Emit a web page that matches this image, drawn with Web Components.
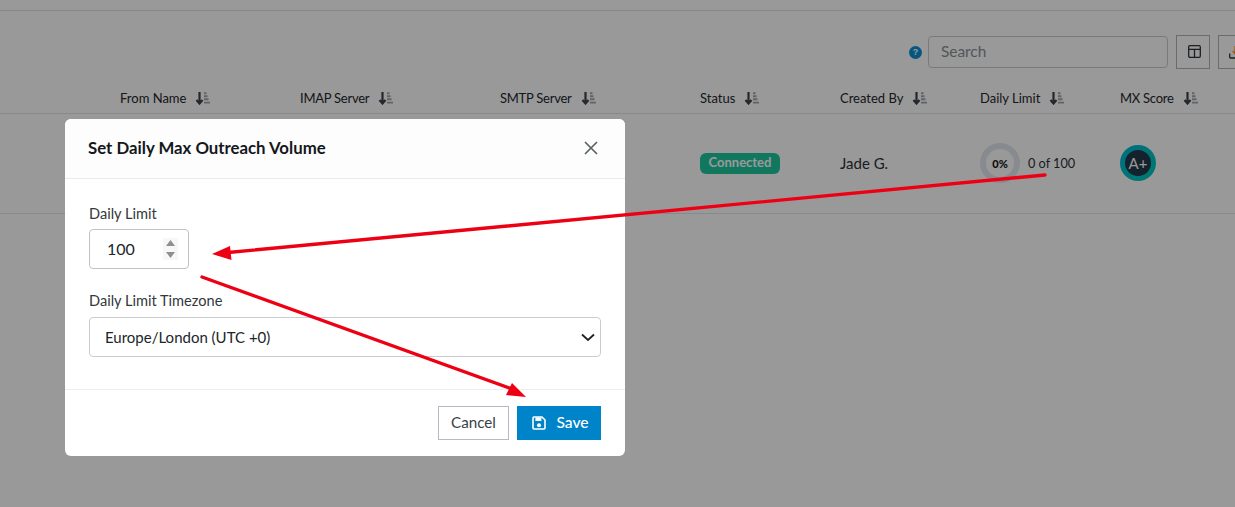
<!DOCTYPE html>
<html><head><meta charset="utf-8"><style>
html,body{margin:0;padding:0;height:100%;overflow:hidden;background:#fff}
body{font-family:"Lato","Open Sans","Liberation Sans",sans-serif;color:#212529}
</style></head><body>
<app-page>
  <page-toolbar></page-toolbar>
  <data-table></data-table>
</app-page>
<modal-backdrop>
  <volume-dialog></volume-dialog>
</modal-backdrop>
<annotation-arrows></annotation-arrows>
<script>
const sortIcon=`<svg width="15" height="14" viewBox="0 0 15 14"><path d="M4.5 1v11M1.5 9l3 3.5 3-3.5" fill="none" stroke="#3d4248" stroke-width="2.2"/><path d="M9 2.2h2.5M9 5.2h3.5M9 8.2h4.5M9 11.6h6" stroke="#a2a6aa" stroke-width="1.9"/></svg>`;
function def(name,html){customElements.define(name,class extends HTMLElement{constructor(){super();this.attachShadow({mode:'open'}).innerHTML=html}})}
def('app-page',`<style>:host{display:block;width:1252px;height:507px;background:#fff;overflow:hidden;padding-top:10px;box-sizing:border-box}
.rule{height:1px;background:#dfe1e4}</style><div class="rule"></div><slot></slot>`);
def('page-toolbar',`<style>:host{display:flex;justify-content:flex-end;align-items:center;gap:6px;height:34px;margin-top:24px}
.help{width:13px;height:13px;border-radius:50%;background:#0b8fd8;color:#fff;font:700 9px/13px "Liberation Sans",sans-serif;text-align:center}
input{box-sizing:border-box;width:240px;height:32px;border:1px solid #c9ccd0;border-radius:4px;padding:0 12px 2px;font:15.4px "Lato",sans-serif;outline:0;color:#212529;background:#fff}
input::placeholder{color:#8a8f94;opacity:1}
.btns{display:flex;gap:8px;margin-left:2px}
.btn{box-sizing:border-box;width:34px;height:34px;border:1px solid #b0b4b9;display:flex;align-items:center;justify-content:center;background:#fff}
.first{padding:0 0 1px 2px}
</style><span class="help">?</span><input placeholder="Search">
<div class="btns"><div class="btn first"><svg width="13" height="13" viewBox="0 0 13 13" fill="none" stroke="#2f3439" stroke-width="1.3"><rect x=".7" y=".7" width="11.6" height="11.6" rx="1.2"/><path d="M.7 4.3h11.6M6.5 4.3v8"/></svg></div>
<div class="btn"><svg width="12" height="14" viewBox="0 0 12 14" fill="none" stroke="#2f3439" stroke-width="1.3"><path d="M.7 8.5v3.6c0 .5.4.9.9.9h8.8c.5 0 .9-.4.9-.9V8.5"/><path d="M6 1v7.5M3.6 6 6 8.7 8.4 6" stroke="#ff9a1f"/></svg></div></div>`);
def('sort-head',`<style>:host{display:flex;align-items:center;gap:9px;font-size:13px;color:#23272b}</style><slot></slot>${sortIcon}`);
def('status-badge',`<style>:host{display:inline-block;box-sizing:border-box;width:80px;height:21px;line-height:19px;border-radius:6px;background:#1dc89f;color:#fff;font-size:13px;font-weight:700;text-align:center}</style><slot></slot>`);
def('limit-ring',`<style>:host{display:flex;align-items:center;gap:8px;font-size:12.7px;color:#2c3136}
.r{width:40px;height:40px;border-radius:50%;box-sizing:border-box;border:6px solid #e1e8ee;display:flex;align-items:center;justify-content:center;font-size:11px;font-weight:900;color:#15181b}
span{margin-top:-1px}</style><div class="r">0%</div><span><slot></slot></span>`);
def('mx-score',`<style>:host{display:flex;width:36px;height:36px;border-radius:50%;background:linear-gradient(135deg,#00b7d6,#00cdb8);align-items:center;justify-content:center}
div{width:26px;height:26px;border-radius:50%;background:#20394a;color:#fff;font-size:15px;line-height:26px;text-align:center}</style><div><slot></slot></div>`);
def('data-table',`<style>:host{display:block}
.g{display:grid;grid-template-columns:180px 200px 200px 140px 140px 140px 132px;padding-left:120px;box-sizing:border-box}
.h{height:45px;padding-top:14px;align-items:center;border-bottom:1px solid #e4e5ea}
.r{height:100px;padding-bottom:1px;align-items:center;border-bottom:1px solid #e4e5ea}
.n{font-size:15px;color:#2c3136}
.b{display:flex}
.t{letter-spacing:-.25px}
</style>
<div class="g h"><sort-head>From Name</sort-head><sort-head class="t">IMAP Server</sort-head><sort-head class="t">SMTP Server</sort-head><sort-head>Status</sort-head><sort-head>Created By</sort-head><sort-head>Daily Limit</sort-head><sort-head class="t">MX Score</sort-head></div>
<div class="g r"><span></span><span></span><span></span><span class="b"><status-badge>Connected</status-badge></span><span class="n">Jade G.</span><limit-ring>0 of 100</limit-ring><mx-score>A+</mx-score></div>`);
def('modal-backdrop',`<style>:host{position:fixed;inset:0;background:rgba(0,0,0,.4);display:block;padding:119px 0 0 65px;box-sizing:border-box}</style><slot></slot>`);
def('volume-dialog',`<style>:host{display:block;width:560px;height:337px;background:#fff;border-radius:6px;overflow:hidden;font-size:14px;color:#33383d;position:relative}
header{height:60px;box-sizing:border-box;border-bottom:1px solid #e9e9f2;background:#fdfdfd;display:flex;align-items:center;justify-content:space-between;padding:0 27px 2px 23px}
h2{margin:0;font-size:16.8px;font-weight:700;color:#14181c}
main{height:210px;box-sizing:border-box;padding:26px 24px 0}
label{display:block;font-size:14.6px;line-height:18px;margin-bottom:6px;color:#33383d}
.l2{margin-bottom:7px}
.num{box-sizing:border-box;width:100px;height:40px;border:1px solid #bfc2c6;border-radius:4px;display:flex;align-items:center;justify-content:space-between;padding:0 10px 0 17px;font-size:16px;color:#212529;margin-bottom:23px}
.num>span:first-child{margin-bottom:2px}
.spin{box-sizing:border-box;width:15px;height:22px;display:flex;flex-direction:column;align-items:center;justify-content:center;gap:6px;background:#f7f7f7}
.sel{box-sizing:border-box;width:512px;height:40px;border:1px solid #c9ccd0;border-radius:4px;display:flex;align-items:center;justify-content:space-between;padding:0 4px 0 15px;font-size:15px;color:#212529}
footer{height:67px;box-sizing:border-box;border-top:1px solid #ececf2;display:flex;justify-content:flex-end;align-items:center;gap:8px;padding:0 24px 0 0}
.b{box-sizing:border-box;height:34px;display:flex;align-items:center;justify-content:center;font-size:15.2px;padding-bottom:2px}
.c{width:71px;border:1px solid #b4bac4;color:#3a3f45;background:#fff}
.s{width:84px;background:#0084c9;color:#fff;gap:10px;font-weight:500;font-size:15.6px;padding-left:3px}
.s svg{margin-top:2px}
</style>
<header><h2>Set Daily Max Outreach Volume</h2><svg width="14" height="14" viewBox="0 0 14 14"><path d="M1 1l12 12M13 1L1 13" stroke="#5b6268" stroke-width="1.7" fill="none"/></svg></header>
<main><label>Daily Limit</label>
<div class="num"><span>100</span><span class="spin"><svg width="9" height="6" viewBox="0 0 9 6"><path d="M4.5 0l4.5 6H0z" fill="#8f8f8f"/></svg><svg width="9" height="6" viewBox="0 0 9 6"><path d="M0 0h9L4.5 6z" fill="#8f8f8f"/></svg></span></div>
<label class="l2">Daily Limit Timezone</label>
<div class="sel"><span>Europe/London (UTC +0)</span><svg width="16" height="16" viewBox="0 0 16 16"><path d="M2 5.5l6 5.5 6-5.5" fill="none" stroke="#222" stroke-width="1.8"/></svg></div></main>
<footer><div class="b c">Cancel</div><div class="b s"><svg width="14" height="14" viewBox="0 0 14 14"><path fill="none" stroke="#fff" stroke-width="1.6" d="M2 1h8l3 3v8a1 1 0 0 1-1 1H2a1 1 0 0 1-1-1V2a1 1 0 0 1 1-1z"/><path fill="#fff" d="M3.4 1.5h6v3.4h-6z"/><circle cx="7" cy="9.3" r="2" fill="#fff"/></svg>Save</div></footer>`);
def('annotation-arrows',`<style>:host{position:fixed;inset:0;display:block;pointer-events:none}svg{display:block}</style>
<svg width="1235" height="507" viewBox="0 0 1235 507"><g stroke="#ee0014" stroke-width="3.4" fill="#ee0014" stroke-linecap="round">
<path d="M1045 175 228 252.5" fill="none"/><path d="M212 254l18-8 1.5 14z" stroke="none"/>
<path d="M202 277 512 389" fill="none"/><path d="M526 397l-20-2 6-12z" stroke="none"/></g></svg>`);
</script></body></html>
